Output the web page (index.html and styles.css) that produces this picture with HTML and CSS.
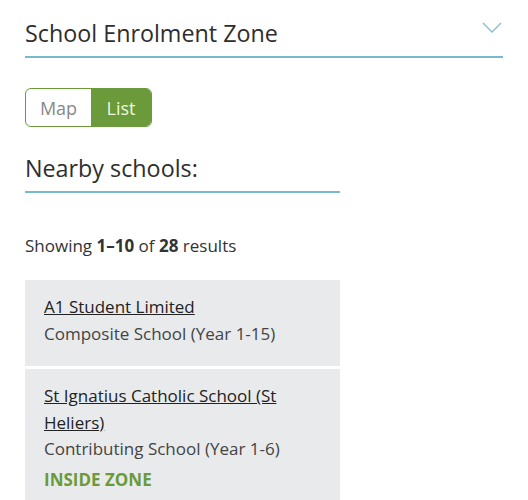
FILE: index.html
```html
<!DOCTYPE html>
<html lang="en">
<head>
    <meta charset="UTF-8">
    <title>School Enrolment Zone</title>
    <link rel="stylesheet" href="styles.css">
</head>
<body>
    <div class="zone-header">
        <h2 class="zone-title">School Enrolment Zone</h2>
        <svg class="chevron" width="20" height="12" viewBox="0 0 20 12">
            <polyline points="1,1 10,10 19,1" fill="none" stroke="#86bcd2" stroke-width="1.3"/>
        </svg>
    </div>

    <div class="toggle">
        <span class="toggle-btn">Map</span>
        <span class="toggle-btn active">List</span>
    </div>

    <h3 class="nearby">Nearby schools:</h3>

    <p class="showing">Showing <b>1–10</b> of <b>28</b> results</p>

    <div class="school-list">
        <div class="school">
            <a href="#" class="school-name">A1 Student Limited</a>
            <div class="school-type">Composite School (Year 1-15)</div>
        </div>
        <div class="school">
            <a href="#" class="school-name">St Ignatius Catholic School (St Heliers)</a>
            <div class="school-type">Contributing School (Year 1-6)</div>
            <div class="inside">INSIDE ZONE</div>
        </div>
    </div>
</body>
</html>
```

FILE: styles.css
```css
body{
    margin: 0;
    padding: 0 25px;
    font-family: 'Open Sans', 'Noto Sans', sans-serif;
    color: #333;
    background: #fff;
}
.zone-header{
    display: flex;
    justify-content: space-between;
    align-items: flex-start;
    border-bottom: 2px solid #7ab8cc;
    padding-top: 16px;
    height: 40px;
}
.zone-title{
    margin: 0;
    font-size: 23.3px;
    font-weight: 400;
    line-height: 34px;
    color: #2e2e2e;
}
.chevron{
    margin-top: 6px;
    margin-right: 1px;
}
.toggle{
    display: inline-flex;
    margin-top: 30px;
    height: 39px;
    border: 1px solid #6a9a3a;
    border-radius: 6px;
    overflow: hidden;
    box-sizing: border-box;
}
.toggle-btn{
    display: flex;
    align-items: center;
    justify-content: center;
    font-size: 18px;
    color: #888;
    width: 65px;
}
.toggle-btn.active{
    background: #6a9a3a;
    color: #eef7dd;
    width: 60px;
}
.nearby{
    margin: 23px 0 0 0;
    width: 315px;
    font-size: 23.3px;
    font-weight: 400;
    line-height: 36px;
    color: #2e2e2e;
    padding-bottom: 5px;
    border-bottom: 2px solid #7ab8cc;
}
.showing{
    margin: 40px 0 0 0;
    font-size: 17px;
    line-height: 26px;
}
.school-list{
    margin-top: 21px;
    width: 315px;
    display: flex;
    flex-direction: column;
    gap: 3px;
}
.school{
    background: #e9eaec;
    padding: 14px 19px 19px 19px;
    font-size: 17px;
    line-height: 26.5px;
}
.school-name{
    color: #222;
    text-decoration: underline;
}
.school-type{
    color: #444;
}
.inside{
    margin-top: 4px;
    font-weight: 700;
    color: #6a9a3a;
}
```
